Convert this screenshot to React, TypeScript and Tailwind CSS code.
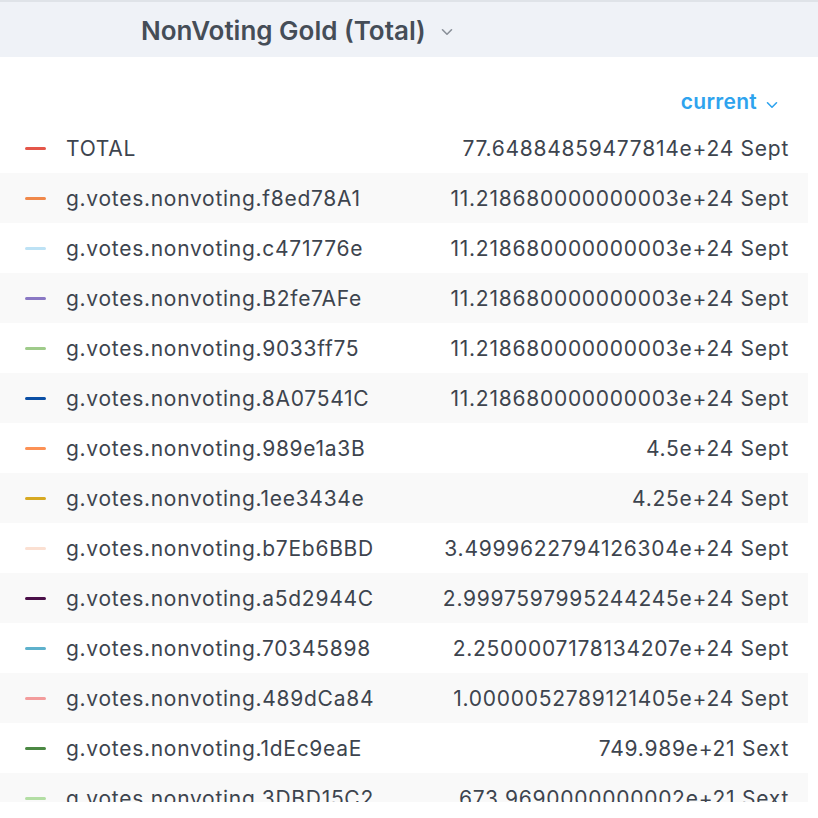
import React from "react";

const rows: { name: string; value: string; color: string }[] = [
  { name: "TOTAL", value: "77.64884859477814e+24 Sept", color: "#e45649" },
  { name: "g.votes.nonvoting.f8ed78A1", value: "11.218680000000003e+24 Sept", color: "#f0884a" },
  { name: "g.votes.nonvoting.c471776e", value: "11.218680000000003e+24 Sept", color: "#bde2f5" },
  { name: "g.votes.nonvoting.B2fe7AFe", value: "11.218680000000003e+24 Sept", color: "#8a78c4" },
  { name: "g.votes.nonvoting.9033ff75", value: "11.218680000000003e+24 Sept", color: "#9fcb8a" },
  { name: "g.votes.nonvoting.8A07541C", value: "11.218680000000003e+24 Sept", color: "#0b4fa5" },
  { name: "g.votes.nonvoting.989e1a3B", value: "4.5e+24 Sept", color: "#fc9155" },
  { name: "g.votes.nonvoting.1ee3434e", value: "4.25e+24 Sept", color: "#d7a922" },
  { name: "g.votes.nonvoting.b7Eb6BBD", value: "3.4999622794126304e+24 Sept", color: "#fbe0d2" },
  { name: "g.votes.nonvoting.a5d2944C", value: "2.9997597995244245e+24 Sept", color: "#4a0f48" },
  { name: "g.votes.nonvoting.70345898", value: "2.2500007178134207e+24 Sept", color: "#5eb1cc" },
  { name: "g.votes.nonvoting.489dCa84", value: "1.0000052789121405e+24 Sept", color: "#f39c9c" },
  { name: "g.votes.nonvoting.1dEc9eaE", value: "749.989e+21 Sext", color: "#4b8843" },
  { name: "g.votes.nonvoting.3DBD15C2", value: "673.9690000000002e+21 Sext", color: "#b3dea4" },
];

function Chevron({ className }: { className?: string }) {
  return (
    <svg viewBox="0 0 12 8" className={className} fill="none" stroke="currentColor" strokeWidth="1.6" strokeLinecap="round" strokeLinejoin="round">
      <path d="M1.5 1.8 L6 6.2 L10.5 1.8" />
    </svg>
  );
}

export default function App() {
  return (
    <div className="w-[818px] h-[818px] bg-white overflow-hidden" style={{ fontFamily: "Inter, Roboto, 'Liberation Sans', sans-serif" }}>
      <div className="h-[802px] overflow-hidden">
        <div className="h-[2px] bg-[#dfe3e8]" />
        <div className="h-[55px] bg-[#eff2f7] flex items-center pl-[141px] pt-[1px]">
          <span className="text-[26px] font-semibold text-[#454d57]">NonVoting Gold (Total)</span>
          <Chevron className="w-[12px] h-[8px] ml-[15px] mt-[3px] text-[#8a9099]" />
        </div>
        <div className="h-[66px] flex items-end justify-end pr-[40px] pb-[6px]">
          <span className="text-[21px] font-semibold tracking-[0.3px] text-[#2ea3ee]">current</span>
          <Chevron className="w-[12px] h-[8px] ml-[9px] mb-[8px] text-[#2ea3ee]" />
        </div>
        <div className="w-[808px]">
          {rows.map((r, i) => (
            <div key={r.name} className={`h-[50px] flex items-center pl-[25px] pr-[20px] pt-[1px] ${i % 2 === 1 ? "bg-[#f9f9f9]" : "bg-white"}`}>
              <span className="w-[21px] h-[3px] rounded-full shrink-0 -mt-[1px]" style={{ backgroundColor: r.color }} />
              <span className="ml-[20px] text-[21px] tracking-[0.72px] text-[#3d444e]">{r.name}</span>
              <span className="ml-auto text-[21px] tracking-[0.74px] -mr-[1px] text-[#3d444e]">{r.value}</span>
            </div>
          ))}
        </div>
      </div>
    </div>
  );
}
